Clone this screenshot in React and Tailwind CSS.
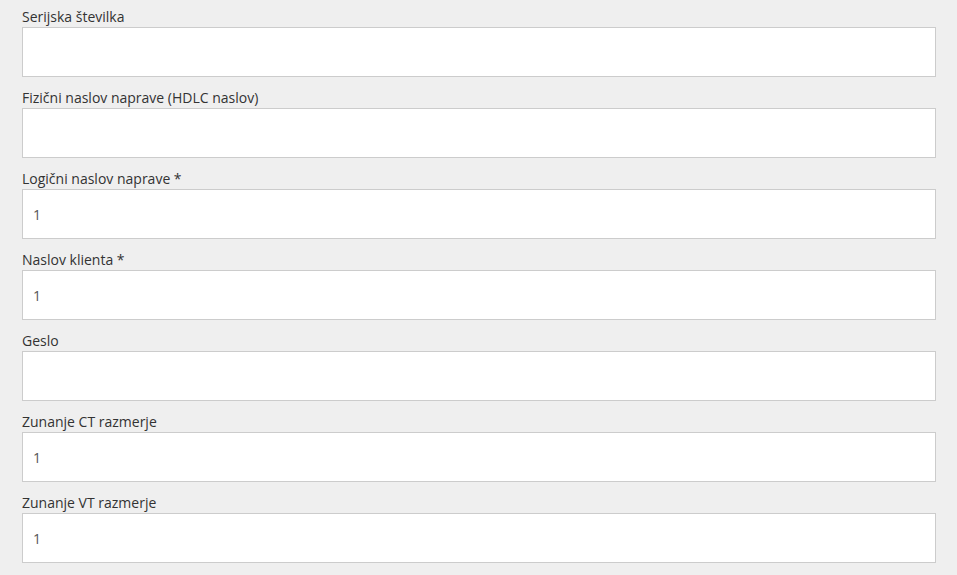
import React from "react";

const fields = [
  { label: "Serijska številka", value: "" },
  { label: "Fizični naslov naprave (HDLC naslov)", value: "" },
  { label: "Logični naslov naprave *", value: "1" },
  { label: "Naslov klienta *", value: "1" },
  { label: "Geslo", value: "" },
  { label: "Zunanje CT razmerje", value: "1" },
  { label: "Zunanje VT razmerje", value: "1" },
];

const Field = ({ label, value }) => (
  <div className="flex flex-col">
    <label className="h-[21px] text-[14px] leading-[21px] text-[#333]">{label}</label>
    <input
      type="text"
      defaultValue={value}
      className="h-[50px] w-full border border-[#ccc] bg-white px-[10px] text-[14px] text-[#555] outline-none"
      style={{ fontFamily: "inherit" }}
    />
  </div>
);

export default function App() {
  return (
    <div
      className="min-h-screen bg-[#efefef] pl-[22px] pr-[21px] pt-[6px]"
      style={{ fontFamily: '"Open Sans", "Noto Sans", sans-serif' }}
    >
      <div className="flex flex-col gap-[10px]">
        {fields.map((f) => (
          <Field key={f.label} label={f.label} value={f.value} />
        ))}
      </div>
    </div>
  );
}
